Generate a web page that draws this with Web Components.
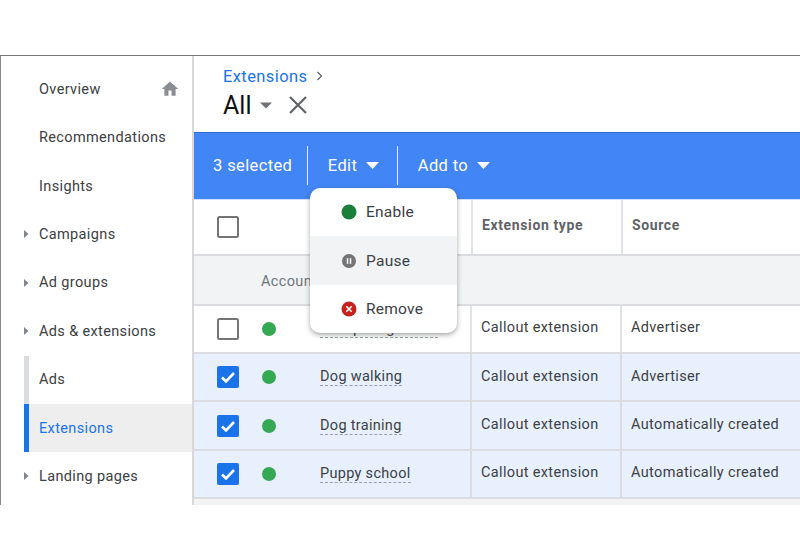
<!DOCTYPE html>
<html><head><meta charset="utf-8">
<style>
html,body{margin:0;padding:0;background:#fff;font-family:Roboto,"Liberation Sans",sans-serif;}
</style></head><body>
<x-app>
  <x-nav slot="nav">
    <x-nav-item home>Overview</x-nav-item>
    <x-nav-item>Recommendations</x-nav-item>
    <x-nav-item>Insights</x-nav-item>
    <x-nav-item arrow>Campaigns</x-nav-item>
    <x-nav-item arrow>Ad groups</x-nav-item>
    <x-nav-item arrow>Ads &amp; extensions</x-nav-item>
    <x-nav-item sub>Ads</x-nav-item>
    <x-nav-item sub active>Extensions</x-nav-item>
    <x-nav-item arrow>Landing pages</x-nav-item>
  </x-nav>
  <x-title-bar slot="main"></x-title-bar>
  <x-action-bar slot="main"></x-action-bar>
  <x-table slot="main">
    <x-row kind="head" type="Extension type" source="Source"></x-row>
    <x-row kind="group" label="Account"></x-row>
    <x-row status name="Free pets grooms" type="Callout extension" source="Advertiser"></x-row>
    <x-row status checked name="Dog walking" type="Callout extension" source="Advertiser"></x-row>
    <x-row status checked name="Dog training" type="Callout extension" source="Automatically created"></x-row>
    <x-row status checked name="Puppy school" type="Callout extension" source="Automatically created"></x-row>
  </x-table>
  <x-menu slot="main"></x-menu>
</x-app>
<script>
function def(name, css, html){
  customElements.define(name, class extends HTMLElement{
    constructor(){super();this.attachShadow({mode:'open'});}
    connectedCallback(){
      this.shadowRoot.innerHTML='<style>'+css+'</style>'+(typeof html==='function'?html(this):html);
    }
  });
}
def('x-app',`
:host{display:block;margin-top:55px;height:450px;width:800px;box-sizing:border-box;border-top:1px solid #777;border-left:1px solid #888;overflow:hidden;font-family:Roboto,"Liberation Sans",sans-serif;}
.w{display:flex;height:100%;}
.n{flex:0 0 191px;width:191px;border-right:2px solid #d8d8d8;}
.m{flex:1;min-width:0;position:relative;}
`,`<div class="w"><div class="n"><slot name="nav"></slot></div><div class="m"><slot name="main"></slot></div></div>`);

def('x-nav',`:host{display:block;padding-top:9.2px;}`,`<slot></slot>`);

def('x-nav-item',`
:host{display:flex;align-items:center;height:48.4px;box-sizing:border-box;padding-left:38px;font-size:14.5px;letter-spacing:.36px;color:#3c4043;position:relative;}
:host([sub]){margin-left:23px;padding-left:10px;border-left:5px solid #dadce0;}
:host([active]){border-left-color:#1a73e8;background:#eeeeee;color:#1a73e8;}
svg{position:absolute;}
.h{left:160px;top:15px;}
.a{left:22px;top:19px;}
`,e=>`<slot></slot>`+
 (e.hasAttribute('home')?`<svg class="h" width="18" height="18" viewBox="0 0 24 24"><path fill="#8a8d91" d="M10 21v-7h4v7h5.5v-9H23L12 2 1 12h3.5v9z"/></svg>`:'')+
 (e.hasAttribute('arrow')?`<svg class="a" width="6" height="10" viewBox="0 0 6 10"><path fill="#80868b" d="M1 1l4.500 4L1 9z"/></svg>`:''));

def('x-title-bar',`
:host{display:block;height:76px;box-sizing:border-box;padding:10px 0 0 29px;background:#fff;}
.c{display:flex;align-items:center;height:20px;font-size:16.5px;letter-spacing:.4px;color:#1a73e8;gap:9px;}
.t{display:flex;align-items:center;height:36px;margin-top:1px;font-size:25px;color:#111;}
.t svg{display:block}
`,`<div class="c">Extensions<svg width="7" height="10" viewBox="0 0 7 10"><path fill="none" stroke="#5f6368" stroke-width="1.300" d="M1.500 1l4 4-4 4"/></svg></div>
<div class="t">All<svg style="margin-left:9px" width="12" height="7" viewBox="0 0 12 7"><path fill="#6f7276" d="M0 .5h12L6 6.500z"/></svg>
<svg style="margin-left:17px" width="18" height="18" viewBox="0 0 18 18"><path stroke="#5f6368" stroke-width="2.200" fill="none" d="M1 1l16 16M17 1L1 17"/></svg></div>`);

def('x-action-bar',`
:host{display:flex;align-items:center;height:68px;box-sizing:border-box;background:#4285f4;border-top:1.500px solid #2f6bd0;border-bottom:1px solid #cfe0fb;color:#fff;font-size:16.5px;letter-spacing:.38px;padding:0 0 1px 19px;}
.d{width:1px;height:39px;background:#e3eefe;}
.i{display:flex;align-items:center;}
svg{margin-left:9px;display:block}
`,`<span class="i">3 selected</span><span class="d" style="margin-left:15px"></span>
<span class="i" style="margin-left:19.500px">Edit<svg width="13" height="7" viewBox="0 0 13 7"><path fill="#fff" d="M0 0h13L6.500 7z"/></svg></span><span class="d" style="margin-left:18px"></span>
<span class="i" style="margin-left:19.500px">Add to<svg width="13" height="7" viewBox="0 0 13 7"><path fill="#fff" d="M0 0h13L6.500 7z"/></svg></span>`);

def('x-table',`:host{display:block;background:#f1f3f4;height:306px;}`,`<slot></slot>`);

const box=`<svg width="22" height="22" viewBox="0 0 22 22"><rect x="1" y="1" width="20" height="20" rx="1.500" fill="#fff" stroke="#757575" stroke-width="2"/></svg>`;
const boxOn=`<svg width="22" height="22" viewBox="0 0 22 22"><rect width="22" height="22" rx="2" fill="#1a73e8"/><path d="M5 11.500l4 4 8-8.500" fill="none" stroke="#fff" stroke-width="2.600"/></svg>`;
def('x-row',`
:host{display:grid;grid-template-columns:275.5px 150px 1fr;height:48.400px;box-sizing:border-box;background:#fff;border-bottom:2px solid #dadce0;font-size:14.500px;letter-spacing:.35px;color:#3c4043;}
:host([checked]){background:#e8f0fe;}
:host([kind=head]){height:56.4px;grid-template-columns:276.5px 150px 1fr;font-weight:700;font-size:14px;letter-spacing:.62px;color:#5f6368;}
:host([kind=group]){display:flex;height:49.2px;background:#f1f3f4;color:#70757a;align-items:center;padding-top:3px;}
.c{display:flex;align-items:center;padding-left:9.5px;}
.c+.c{border-left:2px solid #e0e3e7;padding-bottom:2px;}
:host([kind=head]) .c+.c{padding-bottom:4px;}
:host([checked]) .c+.c{border-left-color:#dadce0;}
.f{padding-left:0;}
.b{display:inline-flex;margin-left:23px;}
.s{width:14px;height:14px;border-radius:50%;background:#34a853;margin-left:23px;flex:none;}
.n{margin-left:44px;border-bottom:1px dashed #9aa0a6;line-height:17px;letter-spacing:.3px;}
.g{margin-left:67px;}
`,e=>{
 const k=e.getAttribute('kind');
 if(k==='group')return `<span class="g">${e.getAttribute('label')}</span>`;
 const a=e.getAttribute('type'),s=e.getAttribute('source');
 const b=`<span class="b">${e.hasAttribute('checked')?boxOn:box}</span>`;
 const st=e.hasAttribute('status')?`<span class="s"></span><span class="n">${e.getAttribute('name')}</span>`:'';
 return `<div class="c f">${b}${st}</div><div class="c">${a}</div><div class="c">${s}</div>`;
});

def('x-menu',`
:host{display:block;position:absolute;left:116px;top:132px;width:147px;height:145px;background:#fff;border-radius:10px;box-shadow:0 2px 5px rgba(60,64,67,.45);overflow:hidden;font-size:15.500px;letter-spacing:.25px;color:#3c4043;}
.r{display:flex;align-items:center;height:48.400px;padding-left:31px;box-sizing:border-box;gap:9px;}
.r.h{background:#f1f3f4;}
svg{display:block}
`,`<div class="r"><svg width="16" height="16" viewBox="0 0 16 16"><circle cx="8" cy="8" r="7.500" fill="#188038"/></svg>Enable</div>
<div class="r h"><svg width="16" height="16" viewBox="0 0 16 16"><circle cx="8" cy="8" r="7" fill="#757575"/><path d="M6.500 5.200v5.600M9.500 5.200v5.600" stroke="#fff" stroke-width="1.500"/></svg>Pause</div>
<div class="r"><svg width="16" height="16" viewBox="0 0 16 16"><circle cx="8" cy="8" r="7.500" fill="#c5221f"/><path d="M5.300 5.300l5.400 5.400M10.700 5.300l-5.400 5.400" stroke="#fff" stroke-width="1.600"/></svg>Remove</div>`);
</script>
</body></html>
